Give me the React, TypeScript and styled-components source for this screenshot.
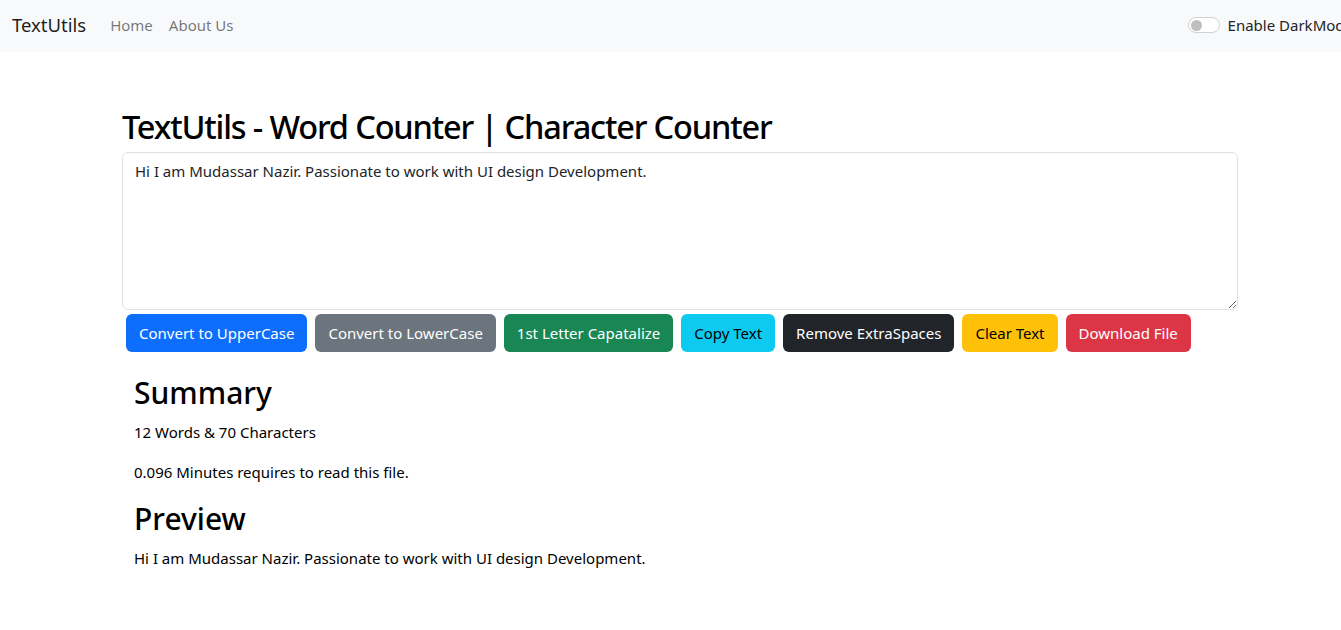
import React, { useState } from "react";
import styled, { createGlobalStyle } from "styled-components";

const GlobalStyle = createGlobalStyle`
  *, *::before, *::after { box-sizing: border-box; }
  html, body { margin: 0; padding: 0; }
  body {
    font-family: "Noto Sans", "Open Sans", sans-serif;
    font-size: 16px;
    line-height: 1.5;
    color: #212529;
    background: #fff;
    overflow-x: hidden;
  }
`;

const Navbar = styled.nav`
  height: 52px;
  background: #f8f9fa;
  display: flex;
  align-items: center;
  justify-content: space-between;
  padding: 0 0 2px 12px;
  overflow: hidden;
`;

const NavLeft = styled.div`
  display: flex;
  align-items: center;
`;

const Brand = styled.a`
  font-size: 18.5px;
  color: rgba(0, 0, 0, 0.9);
  margin-right: 16px;
  text-decoration: none;
`;

const NavLink = styled.a`
  font-size: 15px;
  color: rgba(0, 0, 0, 0.55);
  padding: 0 8px;
  text-decoration: none;
`;

const SwitchWrap = styled.label`
  display: flex;
  align-items: center;
  gap: 8px;
  white-space: nowrap;
  margin-right: -12px;
  font-size: 15px;
  color: #212529;
`;

const SwitchTrack = styled.span`
  width: 32px;
  height: 16px;
  border: 1px solid #d0d3d6;
  border-radius: 8px;
  background: #fff;
  display: flex;
  align-items: center;
  padding-left: 2px;
`;

const SwitchKnob = styled.span`
  width: 11px;
  height: 11px;
  border-radius: 50%;
  background: #bfbfbf;
`;

const Container = styled.main`
  width: 1116px;
  margin-left: 122px;
`;

const Title = styled.h1`
  font-size: 32.5px;
  font-weight: 500;
  line-height: 48px;
  letter-spacing: -1.15px;
  margin: 51px 0 0;
  color: #000;
`;

const TextArea = styled.textarea`
  display: block;
  width: 1116px;
  height: 158px;
  margin-top: 1px;
  padding: 7px 12px 6px;
  font-family: inherit;
  font-size: 15px;
  line-height: 1.5;
  color: #212529;
  border: 1px solid #dee2e6;
  border-radius: 6px;
  resize: vertical;
  outline: none;
`;

const ButtonRow = styled.div`
  display: flex;
  flex-wrap: wrap;
  padding: 4px 0 0;
`;

const variants: Record<string, { bg: string; fg: string }> = {
  primary: { bg: "#0d6efd", fg: "#fff" },
  secondary: { bg: "#6c757d", fg: "#fff" },
  success: { bg: "#198754", fg: "#fff" },
  info: { bg: "#0dcaf0", fg: "#000" },
  dark: { bg: "#212529", fg: "#fff" },
  warning: { bg: "#ffc107", fg: "#000" },
  danger: { bg: "#dc3545", fg: "#fff" },
};

const Button = styled.button<{ $variant: string }>`
  height: 38px;
  margin: 0 4px;
  padding: 0 13px;
  border: none;
  border-radius: 6px;
  font-family: inherit;
  font-size: 15px;
  background: ${(p) => variants[p.$variant].bg};
  color: ${(p) => variants[p.$variant].fg};
  cursor: pointer;
`;

const Section = styled.section`
  padding: 22px 12px 0;
`;

const H2 = styled.h2<{ $mt?: number }>`
  font-size: 30px;
  font-weight: 500;
  line-height: 38px;
  margin: ${(p) => p.$mt ?? 0}px 0 8px;
  color: #000;
`;

const P = styled.p`
  margin: 0 0 16px;
  font-size: 15px;
  line-height: 24px;
  color: #000;
`;

const text = "Hi I am Mudassar Nazir. Passionate to work with UI design Development.";

export default function App() {
  const [value, setValue] = useState(text);
  const buttons: [string, string][] = [
    ["primary", "Convert to UpperCase"],
    ["secondary", "Convert to LowerCase"],
    ["success", "1st Letter Capatalize"],
    ["info", "Copy Text"],
    ["dark", "Remove ExtraSpaces"],
    ["warning", "Clear Text"],
    ["danger", "Download File"],
  ];
  return (
    <>
      <GlobalStyle />
      <Navbar>
        <NavLeft>
          <Brand href="#">TextUtils</Brand>
          <NavLink href="#">Home</NavLink>
          <NavLink href="#">About Us</NavLink>
        </NavLeft>
        <SwitchWrap>
          <SwitchTrack>
            <SwitchKnob />
          </SwitchTrack>
          Enable DarkMode
        </SwitchWrap>
      </Navbar>
      <Container>
        <Title>TextUtils - Word Counter | Character Counter</Title>
        <TextArea value={value} onChange={(e) => setValue(e.target.value)} />
        <ButtonRow>
          {buttons.map(([v, label]) => (
            <Button key={label} $variant={v}>
              {label}
            </Button>
          ))}
        </ButtonRow>
        <Section>
          <H2>Summary</H2>
          <P>12 Words &amp; 70 Characters</P>
          <P>0.096 Minutes requires to read this file.</P>
          <H2 $mt={4}>Preview</H2>
          <P>{text}</P>
        </Section>
      </Container>
    </>
  );
}
